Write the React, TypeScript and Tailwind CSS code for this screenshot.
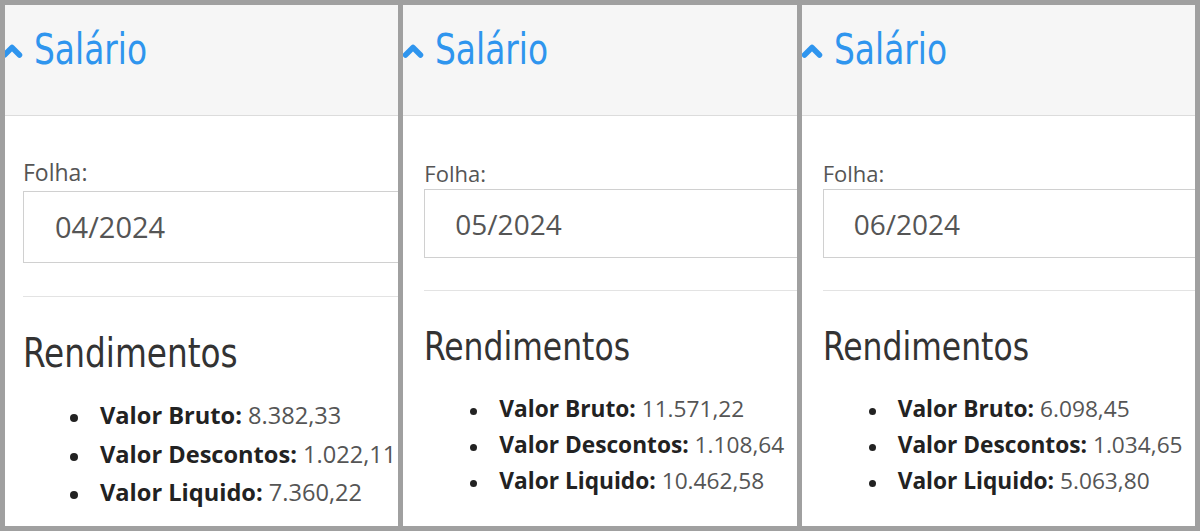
type PanelProps = {
  month: string;
  bruto: string;
  descontos: string;
  liquido: string;
  large?: boolean;
};

const titleFont = { fontFamily: '"DejaVu Sans Condensed", "DejaVu Sans", sans-serif' };
const bodyFont = { fontFamily: '"Open Sans", "Liberation Sans", sans-serif' };

function ChevronUp() {
  return (
    <svg viewBox="0 0 22 17" className="w-[22px] h-[17px] shrink-0" fill="none">
      <polyline
        points="3.5,13 11,5.5 18.5,13"
        stroke="#2f95ee"
        strokeWidth="5.5"
        strokeLinecap="round"
        strokeLinejoin="round"
      />
    </svg>
  );
}

function Panel({ month, bruto, descontos, liquido, large = false }: PanelProps) {
  const rows = [
    ['Valor Bruto:', bruto],
    ['Valor Descontos:', descontos],
    ['Valor Liquido:', liquido],
  ];

  return (
    <div className="flex-1 min-w-0 overflow-hidden bg-white">
      {/* Header */}
      <div
        className={`h-[111px] bg-[#f6f6f6] border-b border-[#dcdcdc] flex items-start pt-[37px] gap-[11px] ${
          large ? '-ml-[4px]' : '-ml-[1px]'
        }`}
      >
        <ChevronUp />
        <span
          className="-mt-[14px] inline-block origin-left scale-x-[0.87] text-[42px] leading-[44px] text-[#2f95ee] whitespace-nowrap"
          style={titleFont}
        >
          Salário
        </span>
      </div>

      {/* Body */}
      <div
        className={large ? 'pl-[18px] pt-[41px]' : 'pl-[21px] pt-[42px]'}
        style={bodyFont}
      >
        <div
          className={
            large
              ? 'text-[23px] leading-[31px] text-[#555]'
              : 'text-[22px] leading-[30px] text-[#555]'
          }
        >
          Folha:
        </div>
        <div
          className={`border border-r-0 border-[#d0d0d0] flex items-center text-[#555] ${
            large ? 'mt-[3px] h-[72px] pl-[31px] text-[29px]' : 'mt-[1px] h-[69px] pl-[30px] text-[28px]'
          }`}
        >
          {month}
        </div>
        <div className={`border-t border-[#e3e3e3] ${large ? 'mt-[33px]' : 'mt-[32px]'}`} />

        <h3
          className={`inline-block origin-left scale-x-[0.91] whitespace-nowrap text-[#333] ${
            large ? 'mt-[33px] text-[40px] leading-[46px]' : 'mt-[34px] text-[38.4px] leading-[44px]'
          }`}
          style={titleFont}
        >
          Rendimentos
        </h3>

        <ul
          className={
            large
              ? 'mt-[20px] pl-[47px] text-[23.6px] leading-[38.5px]'
              : 'mt-[22px] pl-[46px] text-[22.7px] leading-[36px]'
          }
        >
          {rows.map(([label, value]) => (
            <li key={label} className="flex whitespace-nowrap text-[#555]">
              <span
                className={`self-start shrink-0 rounded-full bg-[#222] ${
                  large ? 'mt-[18px] mr-[22px] w-[8px] h-[8px]' : 'mt-[17px] mr-[22px] w-[7px] h-[7px]'
                }`}
              />
              <span>
                <span className="font-bold text-[#222]">{label}</span> {value}
              </span>
            </li>
          ))}
        </ul>
      </div>
    </div>
  );
}

export default function App() {
  return (
    <div className="w-[1200px] h-[531px] bg-[#a0a0a0] p-[5px] flex gap-[5px] overflow-hidden">
      <Panel month="04/2024" bruto="8.382,33" descontos="1.022,11" liquido="7.360,22" large />
      <Panel month="05/2024" bruto="11.571,22" descontos="1.108,64" liquido="10.462,58" />
      <Panel month="06/2024" bruto="6.098,45" descontos="1.034,65" liquido="5.063,80" />
    </div>
  );
}
